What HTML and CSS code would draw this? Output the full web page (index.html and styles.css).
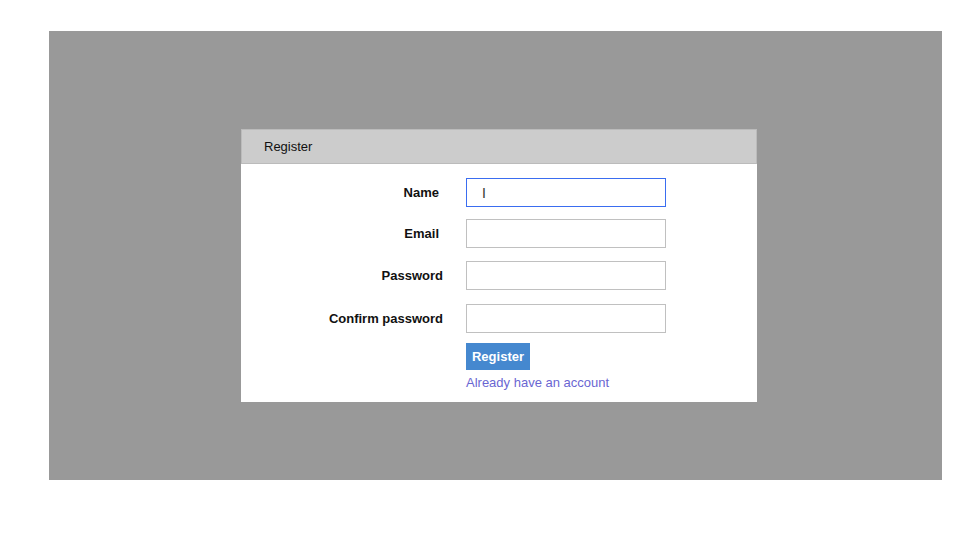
FILE: index.html
```html
<!DOCTYPE html>
<html>
<head>
<meta charset="utf-8">
<title>Register</title>
<link rel="stylesheet" href="styles.css">
</head>
<body>
<div class="stage">
  <div class="card">
    <div class="card-header">Register</div>
    <form class="form">
      <div class="row">
        <label class="label label-short">Name</label>
        <input class="field field-focus" type="text" value="I" readonly>
      </div>
      <div class="row row-email">
        <label class="label label-short">Email</label>
        <input class="field" type="text">
      </div>
      <div class="row row-pw">
        <label class="label">Password</label>
        <input class="field" type="password">
      </div>
      <div class="row row-confirm">
        <label class="label">Confirm password</label>
        <input class="field" type="password">
      </div>
      <div class="actions">
        <button class="btn" type="button">Register</button>
        <a class="link" href="#">Already have an account</a>
      </div>
    </form>
  </div>
</div>
</body>
</html>
```

FILE: styles.css
```css
html, body {
  margin: 0;
  padding: 0;
  background: #ffffff;
  font-family: "Liberation Sans", Arial, sans-serif;
  font-size: 13px;
}

.stage {
  margin: 31px 12px 0 49px;
  height: 449px;
  background: #999999;
  padding: 98px 0 0 192px;
  box-sizing: border-box;
}

.card {
  width: 516px;
  background: #ffffff;
}

.card-header {
  background: #cccccc;
  border: 1px solid #bbbbbb;
  height: 33px;
  line-height: 33px;
  padding-left: 22px;
  color: #111111;
  font-size: 13px;
}

.form {
  margin: 0;
  padding: 14px 0 12px 0;
}

.row {
  display: flex;
  align-items: center;
  margin-bottom: 12px;
}

.row-email {
  margin-bottom: 13px;
}

.row-pw {
  margin-bottom: 14px;
}

.row-confirm {
  margin-bottom: 10px;
}

.label {
  width: 202px;
  text-align: right;
  font-weight: bold;
  color: #111111;
  box-sizing: border-box;
  padding-right: 0;
}

.label-short {
  padding-right: 4px;
}

.field {
  margin-left: 23px;
  width: 200px;
  height: 29px;
  box-sizing: border-box;
  border: 1px solid #c0c0c0;
  background: #ffffff;
  padding: 0 0 0 15px;
  font-family: "Liberation Sans", Arial, sans-serif;
  font-size: 14px;
  color: #333333;
  outline: none;
}

.field-focus {
  border-color: #3a6df0;
}

.actions {
  margin-left: 225px;
  display: flex;
  flex-direction: column;
  align-items: flex-start;
}

.btn {
  height: 27px;
  width: 64px;
  padding: 0;
  border: none;
  background: #4588cf;
  color: #ffffff;
  font-family: "Liberation Sans", Arial, sans-serif;
  font-weight: bold;
  font-size: 13px;
}

.link {
  margin-top: 5px;
  color: #6a66d2;
  text-decoration: none;
  font-size: 13px;
  line-height: 15px;
}
```
